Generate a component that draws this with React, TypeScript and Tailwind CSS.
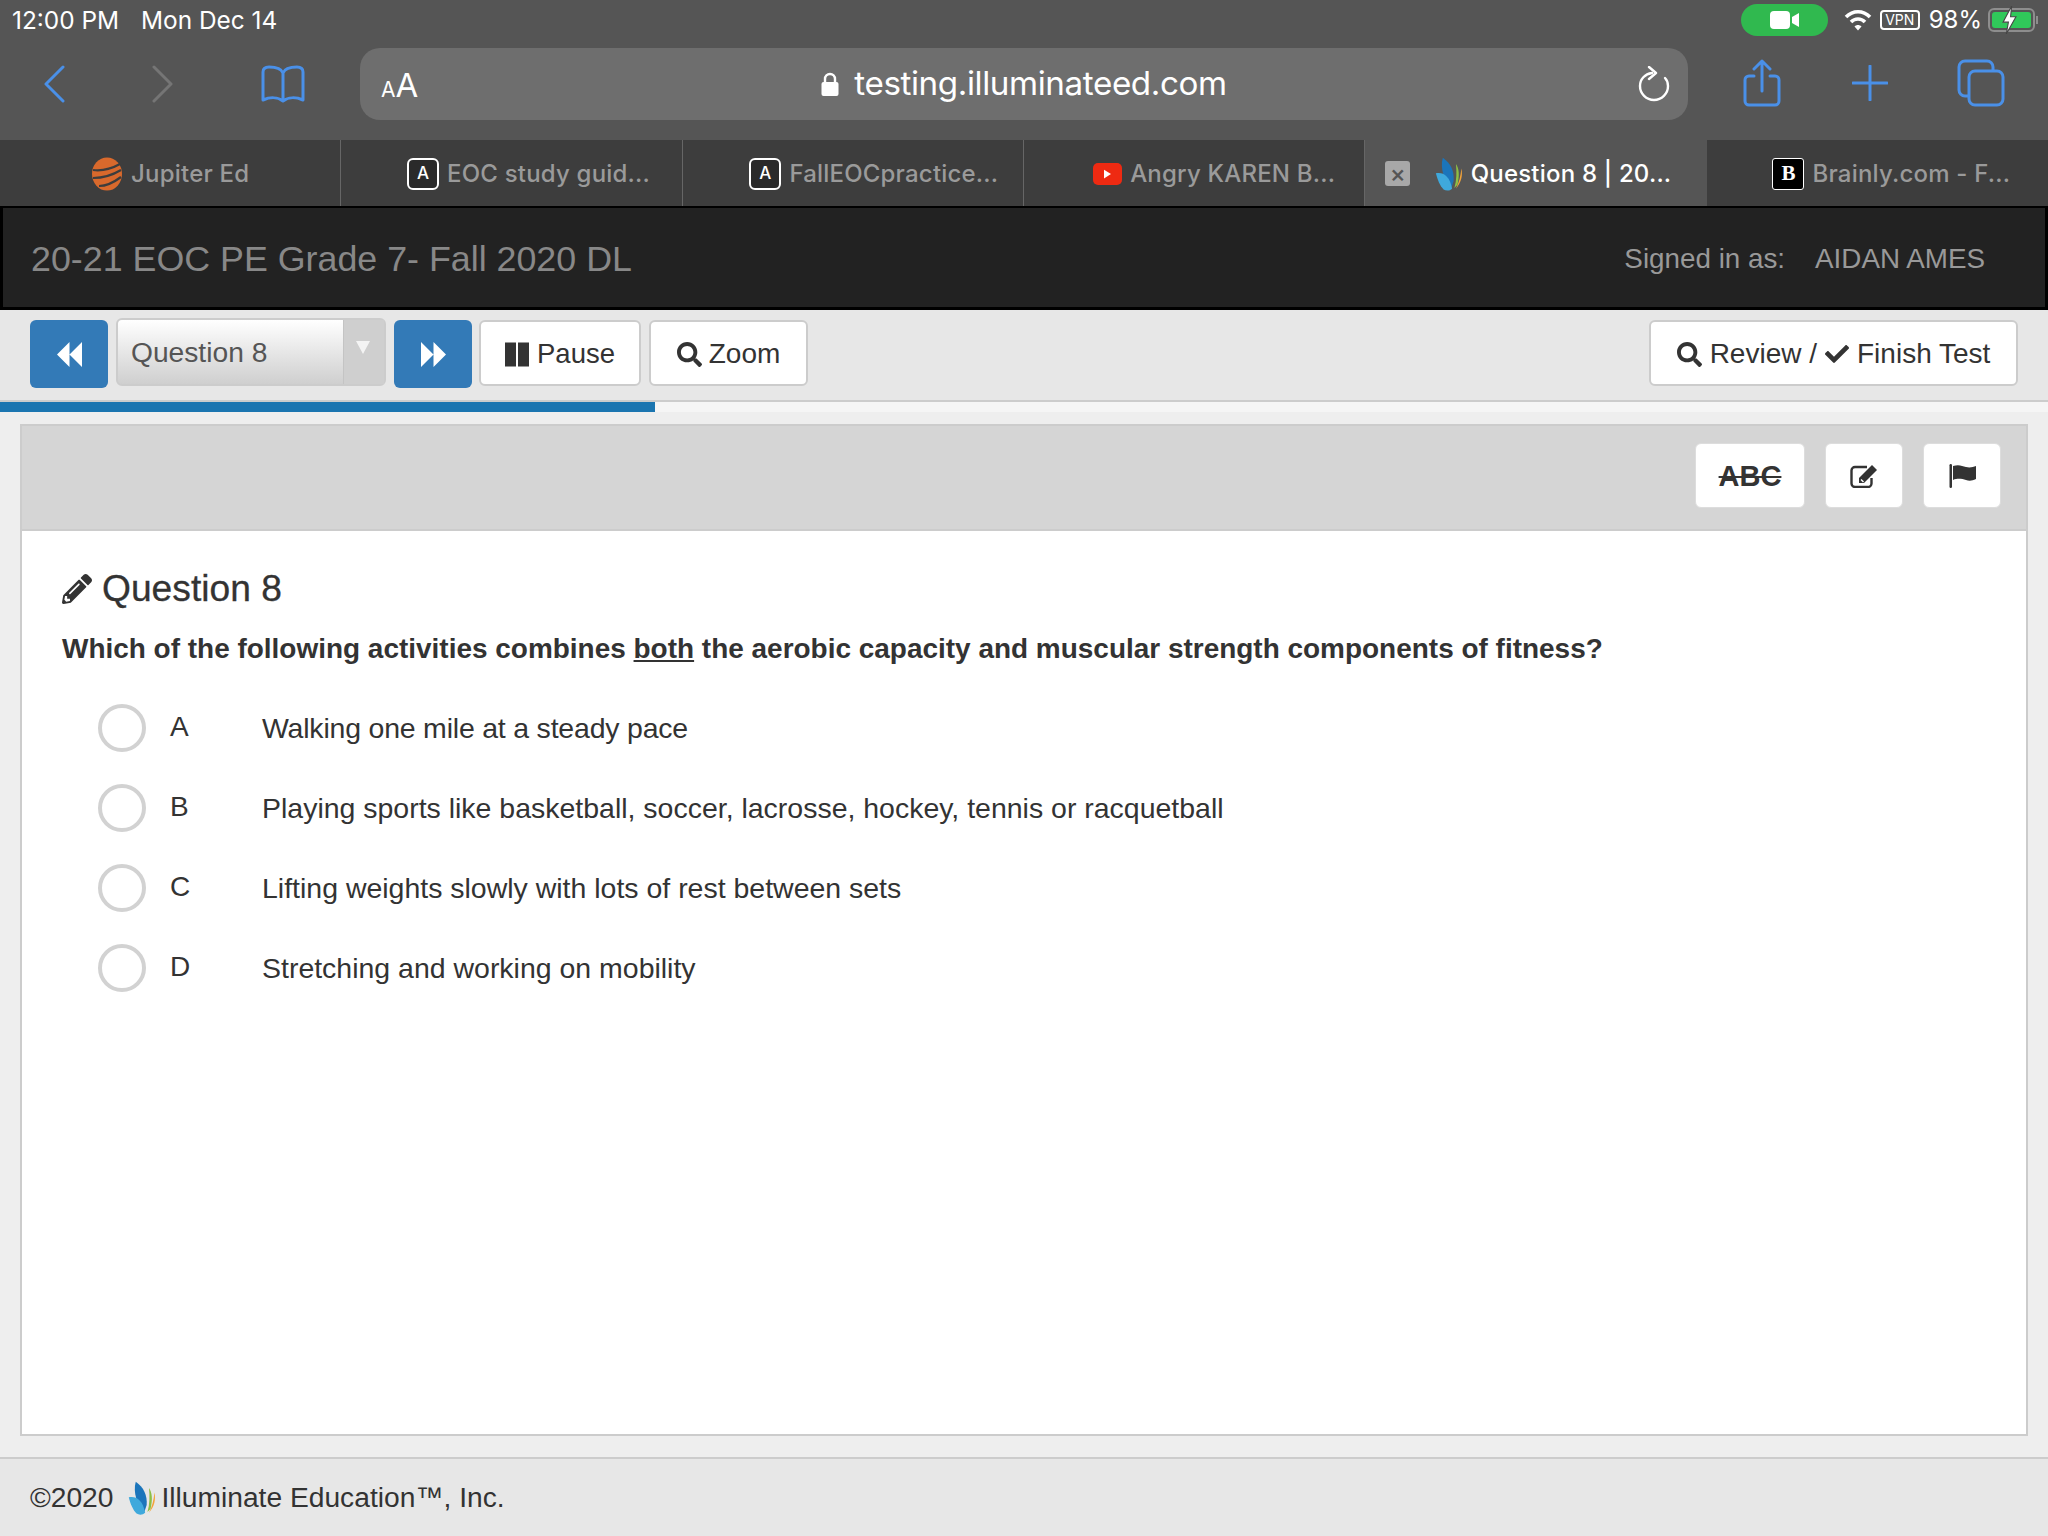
import { FaCheck, FaPencilAlt, FaSearch } from "react-icons/fa";

const tabs = [
  { title: "Jupiter Ed", icon: "jupiter", shift: "" },
  { title: "EOC study guid...", icon: "a", shift: "ml-[34px]" },
  { title: "FallEOCpractice...", icon: "a", shift: "ml-[42px]" },
  { title: "Angry KAREN B...", icon: "yt", shift: "ml-[40px]" },
  { title: "Question 8 | 20...", icon: "logo", shift: "ml-[34px]", active: true },
  { title: "Brainly.com - F...", icon: "b", shift: "ml-[28px]" },
];

const answers = [
  { key: "A", text: "Walking one mile at a steady pace", fit: "tracking-[-0.2px]" },
  { key: "B", text: "Playing sports like basketball, soccer, lacrosse, hockey, tennis or racquetball", fit: "" },
  { key: "C", text: "Lifting weights slowly with lots of rest between sets", fit: "" },
  { key: "D", text: "Stretching and working on mobility", fit: "" },
];

function Logo({ className }: { className: string }) {
  return (
    <svg viewBox="0 0 36 44" className={className}>
      <path d="M10 1c10 7 15 17 14 30l-3 9C12 32 6 14 10 1z" fill="#1b75bb" />
      <path d="M1 21c9-2 18 3 21 20-3 3-8 3-11 1C6 37 3 29 1 21z" fill="#3fa9dc" />
      <path d="M27 9c4 6 5 14 2 27l-4 4c3-10 3-21 2-31z" fill="#8dbf45" />
      <path d="M34 15c2 9 0 18-7 26 4-8 6-16 7-26z" fill="#f3a33a" />
    </svg>
  );
}

function Triangles({ flip }: { flip?: boolean }) {
  return (
    <svg viewBox="0 0 25 25" className={flip ? "w-[25px] h-[25px] scale-x-[-1]" : "w-[25px] h-[25px]"}>
      <path d="M0 12.500L12.500 0v25zM12.500 12.500L25 0v25z" fill="#fff" />
    </svg>
  );
}

function TabIcon({ icon }: { icon: string }) {
  if (icon === "jupiter") {
    return (
      <svg viewBox="0 0 32 34" className="w-[32px] h-[34px]">
        <ellipse cx="16" cy="17" rx="15" ry="16.500" fill="#d9692c" />
        <path d="M2 13c8 1 18-1 27-6M2 21c8 0 18-2 28-8M8 29c7 0 14-3 22-9" stroke="#3d3d3d" strokeWidth="2.200" fill="none" />
      </svg>
    );
  }
  if (icon === "a") {
    return (
      <span className="w-[32px] h-[32px] rounded-[6px] border-2 border-white bg-[#2a2a2a] text-white text-[17px] flex items-center justify-center">
        A
      </span>
    );
  }
  if (icon === "yt") {
    return (
      <span className="w-[29px] h-[22px] rounded-[5px] bg-[#ee2a12] flex items-center justify-center">
        <svg viewBox="0 0 8 10" className="w-[7px] h-[10px]">
          <path d="M0 0l8 5-8 5z" fill="#fff" />
        </svg>
      </span>
    );
  }
  if (icon === "logo") {
    return <Logo className="w-[28px] h-[34px]" />;
  }
  return (
    <span className="w-[32px] h-[32px] rounded-[3px] bg-black border border-white text-white text-[21px] font-bold flex items-center justify-center font-['Liberation_Serif',serif]">
      B
    </span>
  );
}

function StatusRight() {
  return (
    <div className="flex items-center">
      <div className="w-[87px] h-[32px] rounded-full bg-[#30b94f] flex items-center justify-center gap-[2px]">
        <span className="w-[20px] h-[18px] rounded-[4px] bg-white" />
        <svg viewBox="0 0 7 14" className="w-[7px] h-[14px]">
          <path d="M0 4l7-4v14l-7-4z" fill="#fff" />
        </svg>
      </div>
      <svg viewBox="0 0 28 22" className="w-[28px] h-[22px] ml-[16px]">
        <path d="M2 8c7-7 17-7 24 0M7 13c4-4 10-4 14 0" stroke="#fff" strokeWidth="3.600" fill="none" />
        <path d="M10.500 17.500c2-2 5-2 7 0L14 21.500z" fill="#fff" />
      </svg>
      <span className="ml-[8px] w-[40px] h-[20px] rounded-[4px] border-2 border-white text-white text-[14px] leading-none flex items-center justify-center">
        VPN
      </span>
      <span className="ml-[9px] text-[24px] text-white leading-none">98%</span>
      <div className="ml-[6px] relative w-[47px] h-[24px] rounded-[6px] border-2 border-[#8e8e8e] p-[2px]">
        <div className="h-full w-[39px] rounded-[3px] bg-[#30c85a]" />
        <svg viewBox="0 0 14 26" className="absolute left-[11px] top-[-4px] w-[17px] h-[28px]">
          <path d="M9 0L1 15h5l-2 11 9-16H8z" fill="#fff" stroke="#444" strokeWidth="1" />
        </svg>
      </div>
      <span className="ml-[1px] w-[2px] h-[8px] bg-[#8e8e8e]" />
    </div>
  );
}

function SafariBar() {
  return (
    <div className="h-[140px] bg-[#555555] font-['Inter',sans-serif]">
      <div className="h-[48px] pl-[12px] pr-[10px] flex items-center justify-between pb-[8px]">
        <div className="text-white text-[24.4px] flex gap-[22px] leading-none">
          <span>12:00 PM</span>
          <span>Mon Dec 14</span>
        </div>
        <StatusRight />
      </div>
      <div className="flex items-center h-[72px]">
        <div className="w-[360px] flex items-center">
          <svg viewBox="0 0 22 38" className="ml-[43px] w-[22px] h-[38px]">
            <path d="M20 2L3 19l17 17" stroke="#4a90e8" strokeWidth="3" fill="none" strokeLinecap="round" strokeLinejoin="round" />
          </svg>
          <svg viewBox="0 0 22 38" className="ml-[87px] w-[22px] h-[38px]">
            <path d="M2 2l17 17L2 36" stroke="#757575" strokeWidth="3" fill="none" strokeLinecap="round" strokeLinejoin="round" />
          </svg>
          <svg viewBox="0 0 46 38" className="ml-[86px] w-[46px] h-[38px]">
            <path d="M23 8C21 3 16 2 9 2 5 2 3 4 3 7v28c7-3 15-3 20 1 5-4 13-4 20-1V7c0-3-2-5-6-5-7 0-12 1-14 6zM23 8v28" stroke="#4a90e8" strokeWidth="3" fill="none" strokeLinejoin="round" />
          </svg>
        </div>
        <div className="w-[1328px] h-[72px] rounded-[20px] bg-[#6e6e6e] relative flex items-center justify-center text-white">
          <span className="absolute left-[21px] top-[21px] flex items-baseline leading-none">
            <span className="text-[21px]">A</span>
            <span className="text-[33px]">A</span>
          </span>
          <svg viewBox="0 0 18 24" className="w-[18px] h-[26px] mr-[15px]">
            <path d="M4 10V7a5 5 0 0110 0v3" stroke="#fff" strokeWidth="2.400" fill="none" />
            <rect x="0.500" y="10" width="17" height="14" rx="2" fill="#fff" />
          </svg>
          <span className="text-[33.2px] tracking-[-0.4px] leading-none">testing.illuminateed.com</span>
          <svg viewBox="0 0 32 36" className="absolute right-[18px] top-[18px] w-[32px] h-[36px]">
            <path d="M14 7C7 8 2 13 2 20a14 14 0 1028 0c0-3-1-6-3-8" stroke="#fff" strokeWidth="2.400" fill="none" strokeLinecap="round" />
            <path d="M11 1l7 6-7 6" stroke="#fff" strokeWidth="2.400" fill="none" strokeLinecap="round" strokeLinejoin="round" />
          </svg>
        </div>
        <div className="flex-1 relative flex items-center">
          <svg viewBox="0 0 38 48" className="ml-[55px] w-[38px] h-[48px] -mt-[2px]">
            <path d="M11 17H6a4 4 0 00-4 4v21a4 4 0 004 4h26a4 4 0 004-4V21a4 4 0 00-4-4h-5M19 32V2M11 10l8-8 8 8" stroke="#4a90e8" strokeWidth="3" fill="none" strokeLinecap="round" strokeLinejoin="round" />
          </svg>
          <svg viewBox="0 0 36 36" className="ml-[71px] w-[36px] h-[36px] -mt-[2px]">
            <path d="M18 1v34M1 18h34" stroke="#4a90e8" strokeWidth="3" strokeLinecap="round" />
          </svg>
          <svg viewBox="0 0 48 48" className="ml-[69px] w-[48px] h-[48px] -mt-[2px]">
            <path d="M11 37H8a6 6 0 01-6-6V8a6 6 0 016-6h22a6 6 0 016 6v3" stroke="#4a90e8" strokeWidth="3" fill="none" />
            <rect x="12" y="12" width="34" height="34" rx="6" stroke="#4a90e8" strokeWidth="3" fill="none" />
          </svg>
        </div>
      </div>
    </div>
  );
}

function TabStrip() {
  return (
    <div className="h-[68px] border-b-2 border-black bg-[#3d3d3d] grid grid-cols-6 font-['Inter',sans-serif]">
      {tabs.map((tab, i) => (
        <div
          key={i}
          className={
            tab.active
              ? "relative bg-[#555555] pt-[2px] flex items-center justify-center text-white text-[24px] font-medium"
              : "border-r border-[#666666] last:border-r-0 pt-[2px] flex items-center justify-center text-[#9a9a9a] text-[24px] font-medium"
          }
        >
          {tab.active && (
            <span className="absolute left-[20px] top-[21px] w-[25px] h-[25px] rounded-[3px] bg-[#a8a8a8] text-[#555555] text-[24px] leading-none flex items-center justify-center">
              ×
            </span>
          )}
          <span className={`flex items-center gap-[8px] ${tab.shift}`}>
            <TabIcon icon={tab.icon} />
            <span className="whitespace-nowrap tracking-[0.2px]">{tab.title}</span>
          </span>
        </div>
      ))}
    </div>
  );
}

function TestToolbar() {
  const btn =
    "h-[66px] rounded-[6px] bg-white border-2 border-[#cccccc] pt-[2px] flex items-center justify-center text-[28px] text-[#333333]";
  return (
    <div className="h-[92px] bg-[#e7e7e7] border-b-2 border-[#cccccc] pl-[30px] pr-[30px] pt-[10px] flex justify-between">
      <div className="flex items-start">
        <div className="w-[78px] h-[68px] rounded-[6px] bg-[#337ab7] flex items-center justify-center">
          <Triangles />
        </div>
        <div className="ml-[8px] -mt-[2px] w-[270px] h-[68px] rounded-[6px] border-2 border-[#cccccc] bg-gradient-to-b from-white to-[#cfcfcf] flex">
          <span className="flex-1 pl-[13px] text-[28.2px] text-[#555555] flex items-center">Question 8</span>
          <span className="w-[41px] bg-[#cfcfcf] border-l border-[#c4c4c4] flex justify-center pt-[21px]">
            <span className="-ml-[2px] w-0 h-0 border-x-[7px] border-x-transparent border-t-[13px] border-t-[#f4f4f4]" />
          </span>
        </div>
        <div className="ml-[8px] w-[78px] h-[68px] rounded-[6px] bg-[#337ab7] flex items-center justify-center">
          <Triangles flip />
        </div>
        <div className={`${btn} ml-[7px] w-[162px] gap-[8px]`}>
          <svg viewBox="0 0 24 24" className="w-[24px] h-[25px]">
            <path d="M0 0h11v24H0zM13 0h11v24H13z" fill="#333333" />
          </svg>
          <span className="text-[27.5px]">Pause</span>
        </div>
        <div className={`${btn} ml-[8px] w-[159px] gap-[7px]`}>
          <FaSearch size={25} />
          <span>Zoom</span>
        </div>
      </div>
      <div className={`${btn} w-[369px] gap-[8px]`}>
        <FaSearch size={25} />
        <span>Review /</span>
        <FaCheck size={24} />
        <span>Finish Test</span>
      </div>
    </div>
  );
}

function QuestionPanel() {
  const tool = "h-[65px] rounded-[6px] bg-white border border-[#dddddd] flex items-center justify-center text-[#333333]";
  return (
    <div className="flex-1 bg-[#eeeeee] px-[20px] pt-[12px] pb-[21px] flex">
      <div className="flex-1 border-2 border-[#cccccc] bg-white flex flex-col">
        <div className="h-[105px] bg-[#d5d5d5] border-b-2 border-[#cccccc] pt-[17px] pr-[25px] flex justify-end gap-[20px]">
          <div className={`${tool} w-[110px] pt-[2px] text-[29px] font-bold line-through`}>ABC</div>
          <div className={`${tool} w-[78px]`}>
            <svg viewBox="0 0 28 24" className="w-[28px] h-[24px]">
              <path d="M17 3H5a3.500 3.500 0 00-3.500 3.500v13A3.500 3.500 0 005 23h13a3.500 3.500 0 003.500-3.500V14" stroke="#333333" strokeWidth="2.400" fill="none" />
              <path d="M22 1l5 5-13 13H9v-5z" fill="#333333" />
              <path d="M11 15.500l2.500 2.500" stroke="#fff" strokeWidth="1.400" />
            </svg>
          </div>
          <div className={`${tool} w-[78px]`}>
            <svg viewBox="0 0 27 24" className="w-[27px] h-[24px]">
              <rect x="0.500" y="0" width="2.500" height="24" rx="1.200" fill="#333333" />
              <path d="M4 2c6-2 9 0 13 1 4 1 7 0 10-1v13c-4 2-7 2-10 1-4-1-8-2-13 0z" fill="#333333" />
            </svg>
          </div>
        </div>
        <div className="pl-[40px] pt-[37px] text-[#333333]">
          <div className="flex items-center gap-[10px] h-[42px]">
            <FaPencilAlt size={30} />
            <h1 className="text-[37.2px] leading-none font-normal [-webkit-text-stroke:0.3px_#333333]">Question 8</h1>
          </div>
          <p className="mt-[21px] text-[27.96px] font-bold leading-[36px]">
            Which of the following activities combines <span className="underline">both</span> the aerobic capacity and
            muscular strength components of fitness?
          </p>
          <div className="mt-[21px] flex flex-col">
            {answers.map((a) => (
              <div key={a.key} className="h-[80px] pl-[36px] flex items-center">
                <span className="w-[48px] h-[48px] rounded-full border-[4px] border-[#d2d2d2]" />
                <span className="ml-[24px] w-[92px] text-[28px] -mt-[2px]">{a.key}</span>
                <span className={`text-[28.47px] ${a.fit}`}>{a.text}</span>
              </div>
            ))}
          </div>
        </div>
      </div>
    </div>
  );
}

export default function App() {
  return (
    <div className="w-[2048px] h-[1536px] flex flex-col overflow-hidden font-['Liberation_Sans',Arial,sans-serif]">
      <SafariBar />
      <TabStrip />
      <div className="h-[102px] bg-[#222222] border-[3px] border-t-0 border-black flex items-center justify-between pl-[28px] pr-[60px]">
        <span className="pt-[4px] text-[35.8px] text-[#888888]">20-21 EOC PE Grade 7- Fall 2020 DL</span>
        <span className="pt-[2px] text-[27.8px] text-[#999999] flex gap-[30px]">
          <span>Signed in as:</span>
          <span>AIDAN AMES</span>
        </span>
      </div>
      <TestToolbar />
      <div className="h-[10px] bg-[#f5f5f5]">
        <div className="h-full w-[655px] bg-[#1b75b0]" />
      </div>
      <QuestionPanel />
      <div className="h-[79px] bg-[#e7e7e7] border-t-2 border-[#cccccc] pl-[30px] flex items-center text-[28.2px] text-[#333333]">
        <span>©2020</span>
        <Logo className="ml-[15px] w-[28px] h-[36px]" />
        <span className="ml-[5px]">Illuminate Education™, Inc.</span>
      </div>
    </div>
  );
}
